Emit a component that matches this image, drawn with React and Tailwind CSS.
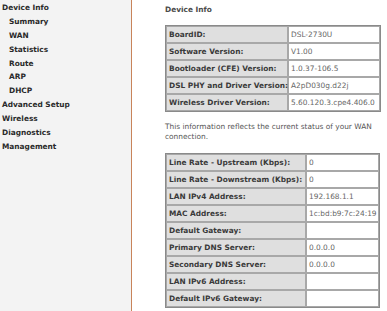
import React from 'react';

const menu = [
  { label: 'Device Info', sub: false },
  { label: 'Summary', sub: true },
  { label: 'WAN', sub: true },
  { label: 'Statistics', sub: true },
  { label: 'Route', sub: true },
  { label: 'ARP', sub: true },
  { label: 'DHCP', sub: true },
  { label: 'Advanced Setup', sub: false },
  { label: 'Wireless', sub: false },
  { label: 'Diagnostics', sub: false },
  { label: 'Management', sub: false },
];

const deviceRows = [
  ['BoardID:', 'DSL-2730U'],
  ['Software Version:', 'V1.00'],
  ['Bootloader (CFE) Version:', '1.0.37-106.5'],
  ['DSL PHY and Driver Version:', 'A2pD030g.d22j'],
  ['Wireless Driver Version:', '5.60.120.3.cpe4.406.0'],
];

const wanRows = [
  ['Line Rate - Upstream (Kbps):', '0'],
  ['Line Rate - Downstream (Kbps):', '0'],
  ['LAN IPv4 Address:', '192.168.1.1'],
  ['MAC Address:', '1c:bd:b9:7c:24:19'],
  ['Default Gateway:', ''],
  ['Primary DNS Server:', '0.0.0.0'],
  ['Secondary DNS Server:', '0.0.0.0'],
  ['LAN IPv6 Address:', ''],
  ['Default IPv6 Gateway:', ''],
];

function InfoTable({ rows, width, labelWidth }) {
  return (
    <table
      className="border border-[#8a8a8a] border-separate border-spacing-0 table-fixed"
      style={{ width }}
    >
      <colgroup>
        <col style={{ width: labelWidth }} />
        <col />
      </colgroup>
      <tbody>
        {rows.map(([k, v]) => (
          <tr key={k}>
            <td className="h-[17px] border border-[#a8a8a8] bg-[#dfdfdf] px-[2px] py-0 font-bold text-[#3a3a3a] whitespace-nowrap leading-none">
              {k}
            </td>
            <td className="h-[17px] border border-[#a8a8a8] bg-white px-[2px] py-0 text-[#666] whitespace-nowrap leading-none overflow-hidden">
              {v}
            </td>
          </tr>
        ))}
      </tbody>
    </table>
  );
}

export default function App() {
  return (
    <div className="flex w-[387px] h-[311px] overflow-hidden bg-white font-['DejaVu_Sans',sans-serif] text-[7.4px]">
      <div className="w-[132px] shrink-0 h-full bg-[#f3f3f3] border-r border-[#c8845a] pt-[2px]">
        {menu.map((m) => (
          <div
            key={m.label}
            className={`h-[13.9px] leading-[11px] font-bold text-[#2a2a2a] ${m.sub ? 'pl-[9px]' : 'pl-[2px]'}`}
          >
            {m.label}
          </div>
        ))}
      </div>
      <div className="flex-1 pl-[33px] pt-[5px]">
        <div className="font-bold text-[#4a4a4a] leading-[10px]">Device Info</div>
        <div className="mt-[10px]">
          <InfoTable rows={deviceRows} width={216} labelWidth={122} />
        </div>
        <p className="mt-[10px] text-[#555] leading-[10px] w-[215px]">
          This information reflects the current status of your WAN connection.
        </p>
        <div className="mt-[11px]">
          <InfoTable rows={wanRows} width={215} labelWidth={140} />
        </div>
      </div>
    </div>
  );
}
